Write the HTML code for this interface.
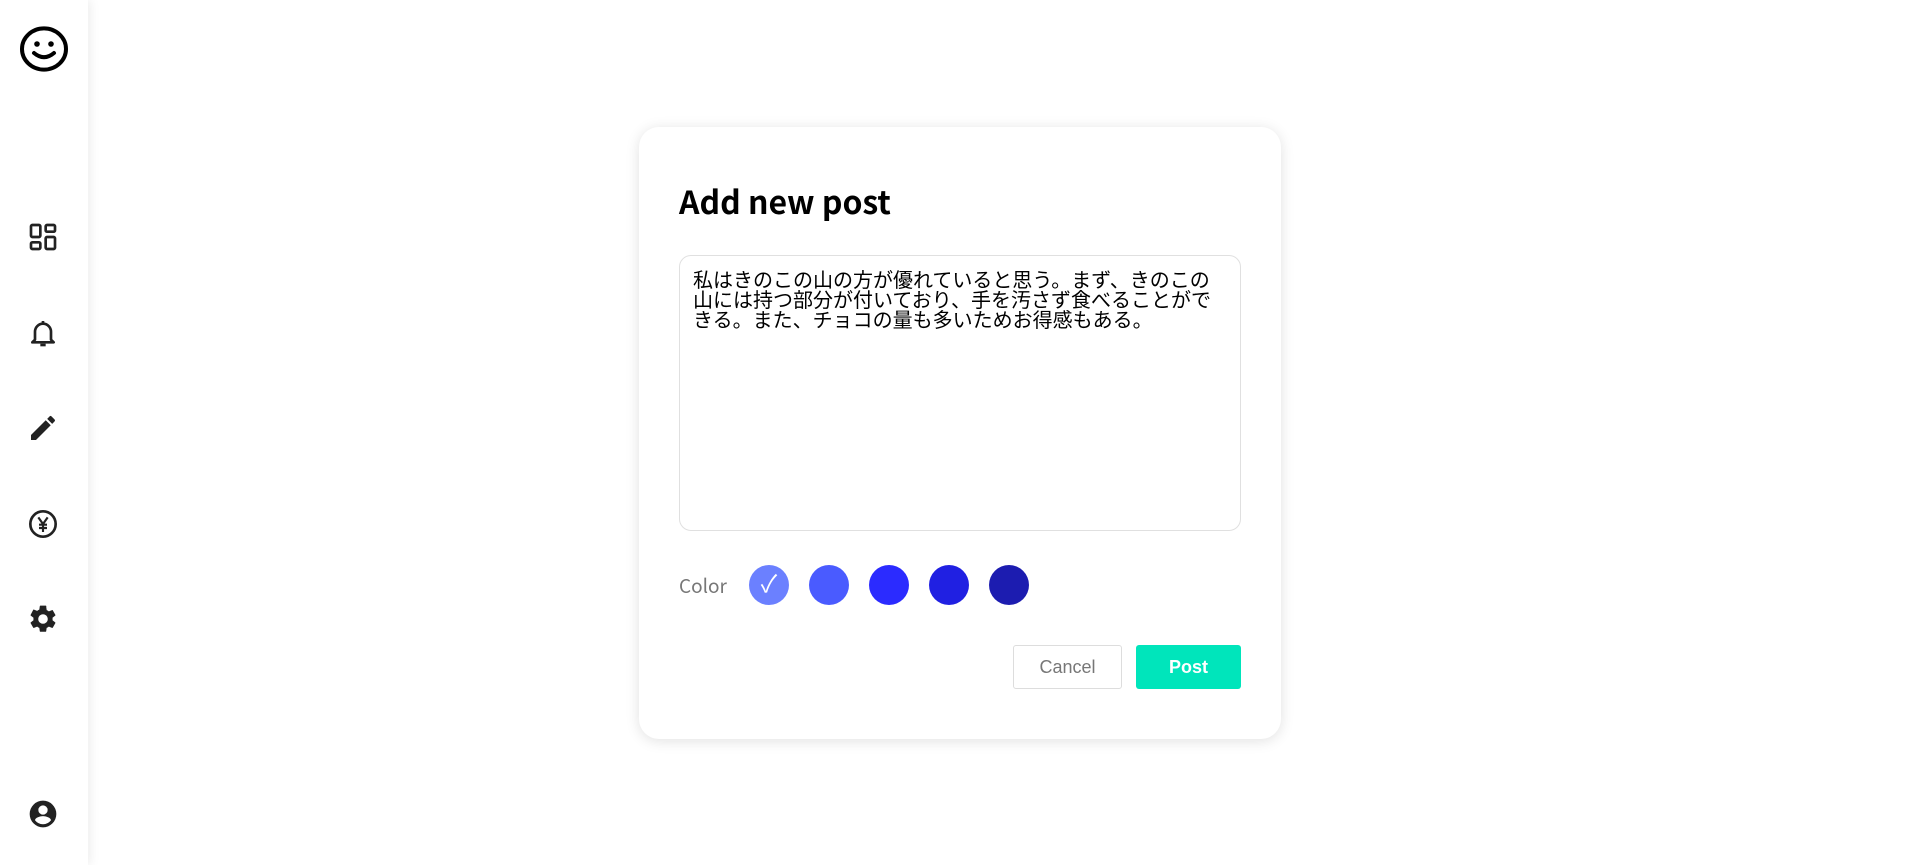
<!DOCTYPE html>
<html><head><meta charset="utf-8"><style>
*{box-sizing:border-box;margin:0;padding:0}
html,body{width:1919px;height:865px;background:#fff;overflow:hidden;font-family:"Liberation Sans","Noto Sans CJK JP",sans-serif}
.side{position:absolute;left:0;top:0;width:88px;height:865px;background:#fff;box-shadow:2px 0 10px rgba(0,0,0,0.08)}
.ic{position:absolute;left:27px;width:32px;height:32px}
.dlg{position:absolute;left:639px;top:127px;width:642px;height:612px;background:#fff;border-radius:20px;box-shadow:0 2px 14px rgba(0,0,0,0.12)}
h1{position:absolute;left:40px;top:51px;font-family:"Noto Sans CJK JP",sans-serif;font-weight:700;font-size:32px;color:#000;line-height:46px}
.ta{position:absolute;left:40px;top:128px;width:562px;height:276px;border:1px solid #e0e0e0;border-radius:12px;padding:13px 13px;font-family:"Noto Sans CJK JP",sans-serif;font-size:20px;line-height:20px;color:#000}
.lbl{position:absolute;left:40px;top:447px;font-family:"Noto Sans CJK JP",sans-serif;font-size:19px;color:#777;line-height:24px}
.c{position:absolute;top:438px;width:40px;height:40px;border-radius:50%;color:#fff;text-align:center;line-height:40px;font-size:24px}
.btn{position:absolute;top:518px;height:44px;border-radius:3px;font-size:18px;text-align:center;line-height:42px}
</style></head><body>
<div class="side">
<svg class="ic" style="left:18px;top:24px;width:52px;height:50px" viewBox="0 0 26 24"><ellipse cx="13" cy="12" rx="11" ry="10.3" fill="none" stroke="#000" stroke-width="2"/><circle cx="9.5" cy="9.5" r="1.4"/><circle cx="16.5" cy="9.5" r="1.4"/><path d="M8 14q5 4.2 10 0" fill="none" stroke="#000" stroke-width="2" stroke-linecap="round"/></svg>
<svg class="ic" style="top:221px" viewBox="0 0 24 24" fill="none" stroke="#222" stroke-width="2"><rect x="3" y="3" width="7" height="9" rx="1"/><rect x="3" y="16" width="7" height="5" rx="1"/><rect x="14" y="3" width="7" height="5" rx="1"/><rect x="14" y="12" width="7" height="9" rx="1"/></svg>
<svg class="ic" style="top:317px" viewBox="0 0 24 24" fill="none" stroke="#222" stroke-width="2"><path d="M6 17V11a6 6 0 0 1 12 0v6l2 2H4z" stroke-linejoin="round"/><path d="M10 21h4"/><path d="M12 3v2"/></svg>
<svg class="ic" style="top:412px" viewBox="0 0 24 24" fill="#222"><path d="M3 17.25V21h3.75L17.81 9.94l-3.75-3.75L3 17.25zM20.71 7.04a1 1 0 0 0 0-1.41l-2.34-2.34a1 1 0 0 0-1.41 0l-1.83 1.83 3.75 3.75 1.83-1.83z"/></svg>
<svg class="ic" style="top:508px" viewBox="0 0 24 24" fill="none" stroke="#222" stroke-width="2"><circle cx="12" cy="12" r="9.5"/><path d="M8.5 7l3.5 5 3.5-5M12 12v6M9 12.5h6M9 15h6" stroke-width="1.6"/></svg>
<svg class="ic" style="top:603px" viewBox="0 0 24 24" fill="#222"><path d="M19.14 12.94a7.5 7.5 0 0 0 0-1.88l2.03-1.58a.5.5 0 0 0 .12-.61l-1.92-3.32a.5.5 0 0 0-.59-.22l-2.39.96a7 7 0 0 0-1.62-.94l-.36-2.54A.5.5 0 0 0 13.920 2h-3.84a.5.5 0 0 0-.48.41l-.36 2.54a7 7 0 0 0-1.62.94l-2.39-.96a.5.5 0 0 0-.59.22L2.72 8.870a.5.5 0 0 0 .12.61l2.03 1.58a7.5 7.5 0 0 0 0 1.88l-2.03 1.58a.5.5 0 0 0-.12.61l1.92 3.32c.12.22.37.29.59.22l2.39-.96c.5.38 1.04.7 1.62.94l.36 2.54c.05.24.25.41.48.41h3.84c.24 0 .44-.17.47-.41l.36-2.54a7 7 0 0 0 1.62-.94l2.39.96c.22.08.47 0 .59-.22l1.92-3.32a.5.5 0 0 0-.12-.61zM12 15.6a3.6 3.6 0 1 1 0-7.2 3.6 3.6 0 0 1 0 7.2z"/></svg>
<svg class="ic" style="top:798px" viewBox="0 0 24 24" fill="#222"><path d="M12 2a10 10 0 1 0 0 20 10 10 0 0 0 0-20zm0 3.5a3.5 3.5 0 1 1 0 7 3.5 3.5 0 0 1 0-7zm0 14.2a7.7 7.7 0 0 1-6-3c.03-2 4-3.1 6-3.1s5.97 1.1 6 3.1a7.7 7.7 0 0 1-6 3z"/></svg>
</div>
<div class="dlg">
<h1>Add new post</h1>
<div class="ta">私はきのこの山の方が優れていると思う。まず、きのこの山には持つ部分が付いており、手を汚さず食べることができる。また、チョコの量も多いためお得感もある。</div>
<div class="lbl">Color</div>
<div class="c" style="left:110px;background:#6b80ff">✓</div>
<div class="c" style="left:170px;background:#4a5bff"></div>
<div class="c" style="left:230px;background:#2b2bff"></div>
<div class="c" style="left:290px;background:#2020e2"></div>
<div class="c" style="left:350px;background:#1c1cb0"></div>
<div class="btn" style="left:374px;width:109px;border:1px solid #ddd;color:#777">Cancel</div>
<div class="btn" style="left:497px;width:105px;background:#00e5bb;color:#fff;font-weight:700;line-height:44px">Post</div>
</div>
</body></html>
